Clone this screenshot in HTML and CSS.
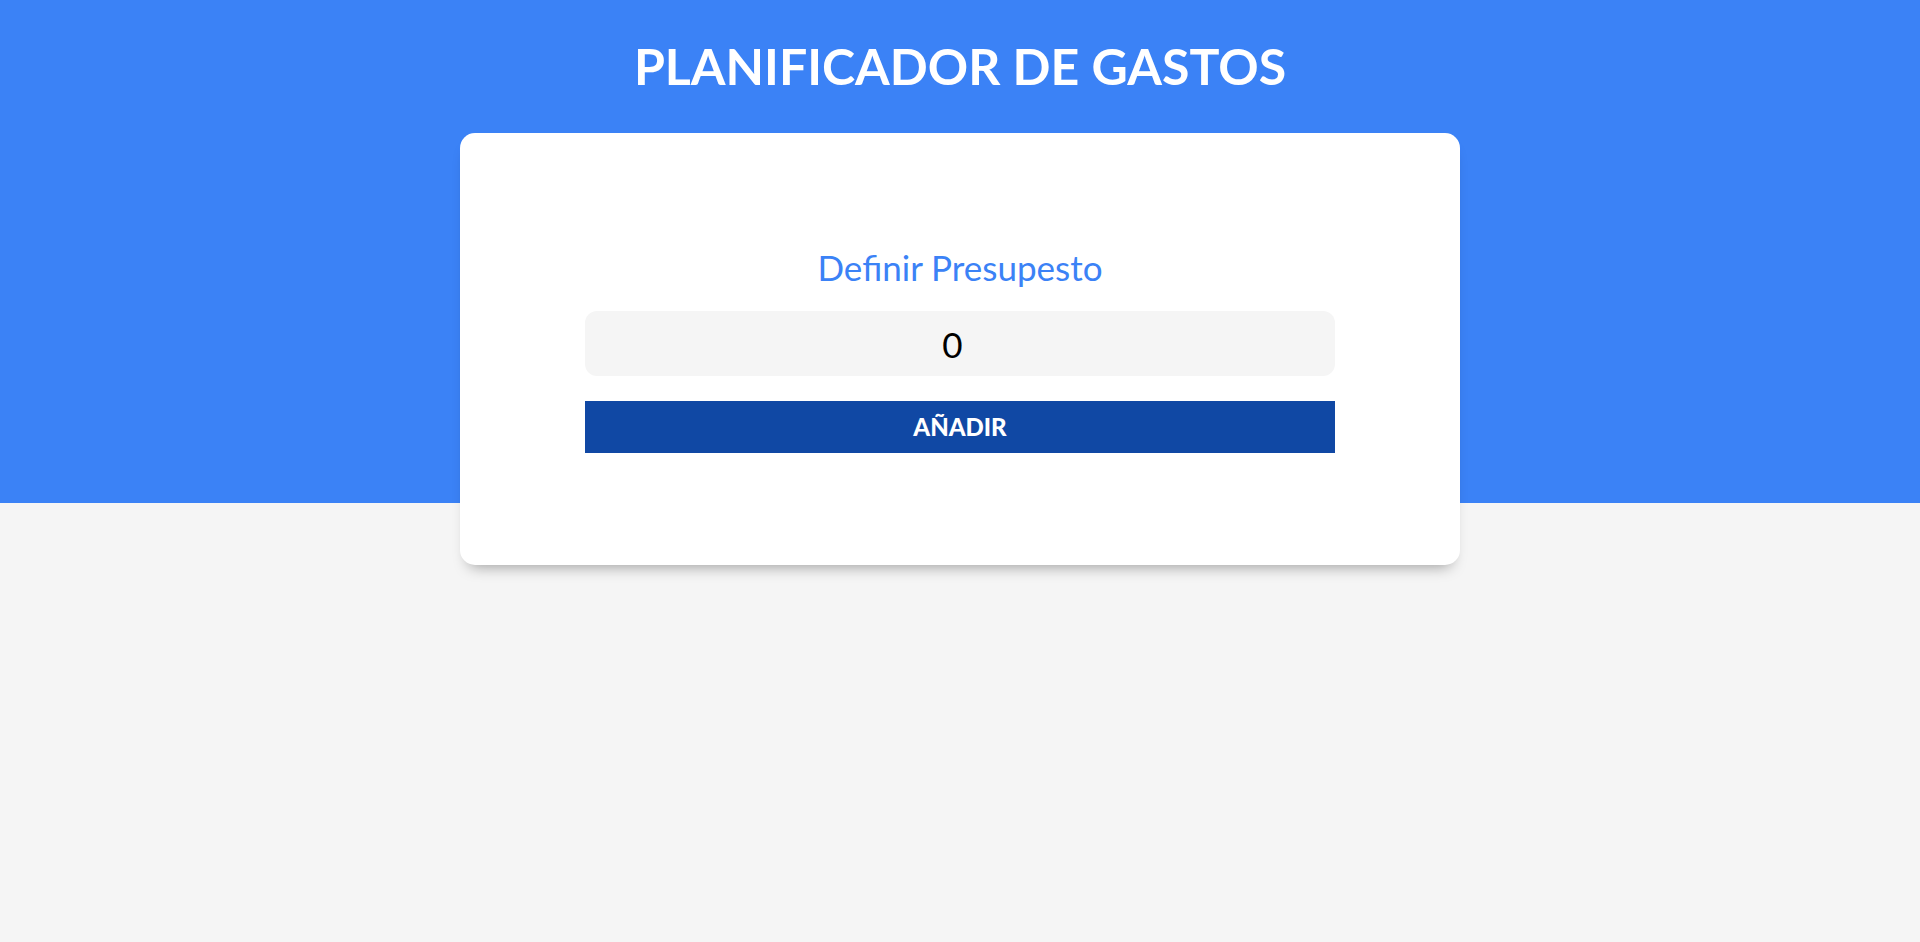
FILE: index.html
```html
<!DOCTYPE html>
<html lang="es">
<head>
<meta charset="utf-8">
<meta name="viewport" content="width=device-width, initial-scale=1">
<title>Planificador de Gastos</title>
<link rel="stylesheet" href="styles.css">
</head>
<body>
<header class="header">
  <h1 class="title">Planificador de Gastos</h1>
  <main class="card">
    <form class="form">
      <div class="field">
        <label class="label" for="budget">Definir Presupesto</label>
        <input class="input" id="budget" type="number" value="0">
      </div>
      <button class="submit" type="submit">Añadir</button>
    </form>
  </main>
</header>
</body>
</html>
```

FILE: styles.css
```css
*, *::before, *::after { box-sizing: border-box; }

body {
  min-height: 100vh;
  margin: 0;
  background-color: #f5f5f5;
  font-family: "Lato", sans-serif;
  font-size: 16px;
}

.header {
  max-height: 503px;
  background-color: #3b82f6;
}

.title {
  margin: 0;
  padding: 36px 0 37px;
  color: #fff;
  font-size: 50px;
  font-weight: 700;
  line-height: 60px;
  text-align: center;
  text-transform: uppercase;
}

.card {
  width: 90%;
  max-width: 1000px;
  margin: 0 auto;
  padding: 112px 50px;
  background-color: #fff;
  border-radius: 15px;
  box-shadow: 0 10px 15px -9px rgba(0, 0, 0, 0.4);
}

.form {
  width: 750px;
  max-width: 100%;
  margin: 0 auto;
}

.field {
  display: grid;
  gap: 22px;
}

.label {
  color: #3b82f6;
  font-size: 35px;
  line-height: 44px;
  text-align: center;
}

.input {
  width: 100%;
  height: 65px;
  padding: 10px;
  border: none;
  border-radius: 12px;
  background-color: #f5f5f5;
  color: #000;
  font-family: inherit;
  font-size: 35px;
  text-align: center;
}

.submit {
  width: 100%;
  margin-top: 25px;
  padding: 12px;
  border: none;
  background-color: #1048a4;
  color: #fff;
  font-family: inherit;
  font-size: 24px;
  font-weight: 900;
  line-height: 28px;
  text-transform: uppercase;
  cursor: pointer;
}
```
